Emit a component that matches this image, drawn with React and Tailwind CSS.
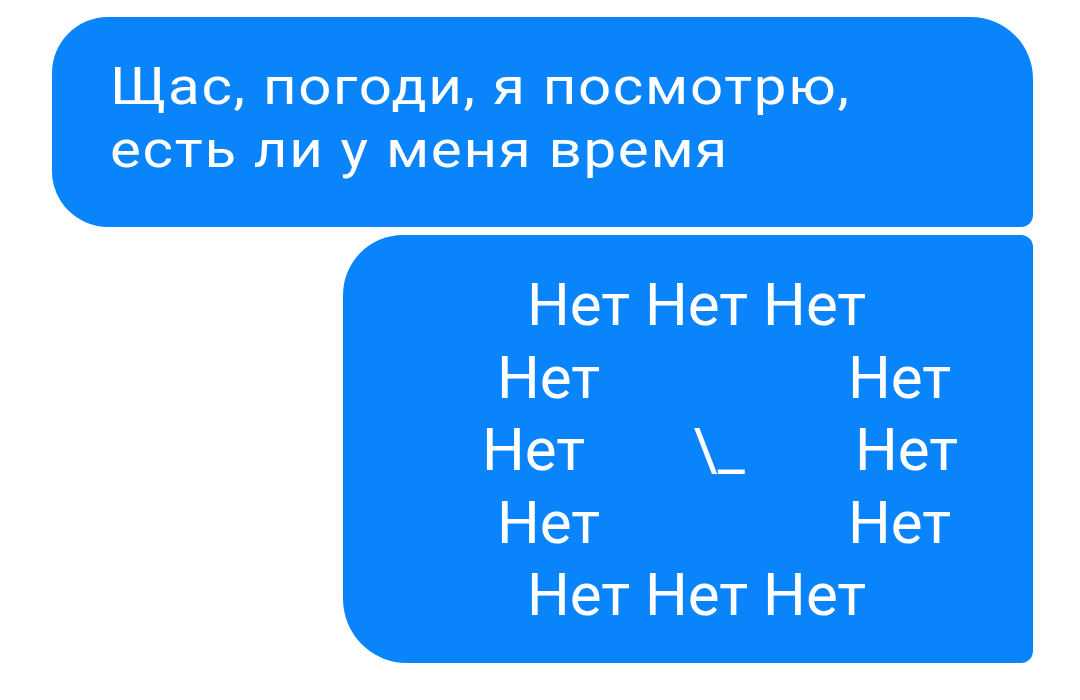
import React from 'react';

const font = { fontFamily: 'Roboto, "Noto Sans", sans-serif' };

const Bubble = ({ className, children }) => (
  <div className={`bg-[#0a84fa] text-white ${className}`}>{children}</div>
);

export default function App() {
  return (
    <div className="w-[1080px] h-[700px] bg-white flex flex-col pt-[17px] pl-[52px] overflow-hidden" style={font}>
      <Bubble className="w-[981px] h-[210px] rounded-tl-[56px] rounded-bl-[56px] rounded-tr-[62px] rounded-br-[12px] pl-[58px] pt-[38px]">
        {/* the source text is a touch wider than Roboto, so stretch it a little */}
        <p className="w-fit text-[52px] leading-[63px] tracking-[1.5px] origin-left scale-x-[1.12] whitespace-nowrap">
          Щас, погоди, я посмотрю,
          <br />
          есть ли у меня время
        </p>
      </Bubble>

      <Bubble className="mt-[8px] ml-[291px] w-[690px] h-[428px] rounded-tl-[60px] rounded-bl-[64px] rounded-tr-[12px] rounded-br-[12px] pt-[34px] text-[60px] leading-[72.5px]">
        <div className="pl-[184px] whitespace-nowrap">Нет Нет Нет</div>
        <div className="flex pl-[154px]">
          <span className="w-[351px]">Нет</span>
          <span>Нет</span>
        </div>
        <div className="flex pl-[139px]">
          <span className="w-[211px]">Нет</span>
          <span className="w-[162px]">\_</span>
          <span>Нет</span>
        </div>
        <div className="flex pl-[154px]">
          <span className="w-[351px]">Нет</span>
          <span>Нет</span>
        </div>
        <div className="pl-[184px] whitespace-nowrap">Нет Нет Нет</div>
      </Bubble>
    </div>
  );
}
